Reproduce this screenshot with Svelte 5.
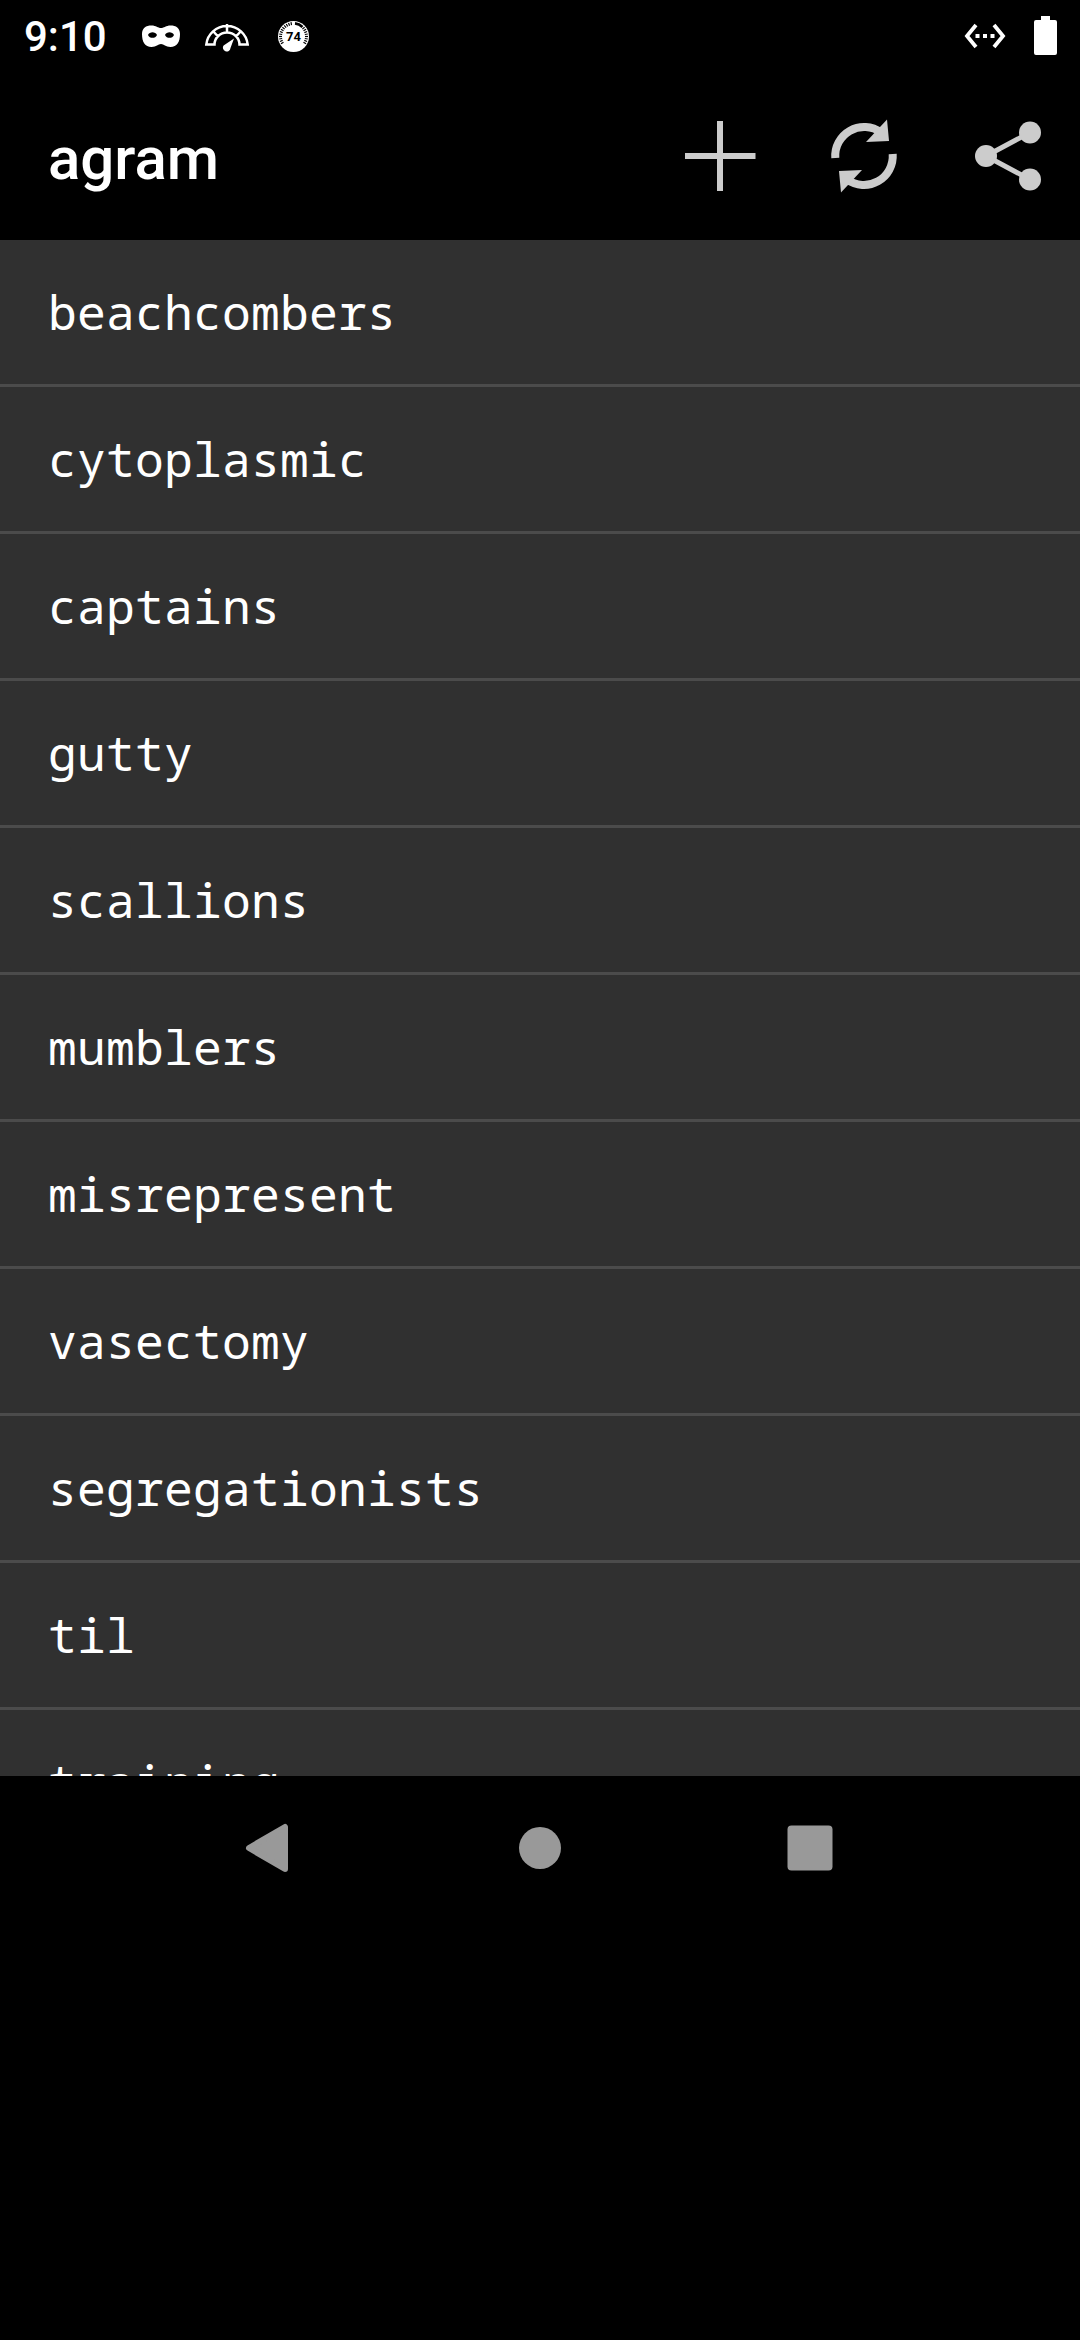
<script>
  const words = [
    'beachcombers', 'cytoplasmic', 'captains', 'gutty', 'scallions', 'mumblers',
    'misrepresent', 'vasectomy', 'segregationists', 'til', 'training'
  ];
  const ticks = Array.from({ length: 25 }, (_, i) => -120 + i * 10).filter((a) => a < 0 || a > 40);
</script>

<div class="screen">
  <header class="status">
    <div class="left">
      <span class="clock">9:10</span>
      <svg class="mask" width="40" height="24" viewBox="0 0 40 24">
        <path fill="#fff" fill-rule="evenodd" d="M1 9C1 3 5 0.500 10.500 0.500C15 0.500 17 3 20 3S25 0.500 29.500 0.500C35 0.500 39 3 39 9C39 17 36 22 29.500 22C24.500 22 23 19 20 19S15.500 22 10.500 22C4 22 1 17 1 9ZM7 10C8.500 13.800 14.500 13.800 16 10C14.500 6.400 8.500 6.400 7 10ZM24 10C25.500 13.800 31.500 13.800 33 10C31.500 6.400 25.500 6.400 24 10Z" />
      </svg>
      <svg class="gauge" width="46" height="30" viewBox="0 0 46 30">
        <path fill="none" stroke="#fff" stroke-width="2.500" d="M2.300 22.500A20.800 20.500 0 0 1 43.700 22.500H35.500A12.500 12 0 0 0 10.500 22.500ZM23 2V10.500M8.500 8.500L14 14.500M37.500 8.500L32 14.500" />
        <path fill="#fff" d="M30 16.500L26.500 26A3.800 3.800 0 1 1 19.600 23.500Z" />
      </svg>
      <svg class="badge" width="32" height="32" viewBox="0 0 32 32">
        <circle cx="16.500" cy="16.500" r="15.500" fill="#fff" />
        <path fill="none" stroke="#000" stroke-width="2.600" d="M18 3.400A13.200 13.200 0 0 1 25.500 7" />
        {#each ticks as angle}
          <path stroke="#000" stroke-width="1.200" d="M16.500 2V5" transform="rotate({angle} 16.500 16.500)" />
        {/each}
        <text x="16.500" y="21.300" text-anchor="middle">74</text>
      </svg>
    </div>
    <div class="right">
      <svg width="42" height="26" viewBox="0 0 42 26">
        <path fill="none" stroke="#fff" stroke-width="3.800" d="M12 2L3 13L12 24M30 2L39 13L30 24" />
        <path fill="#fff" d="M11.500 11H15.500V15H11.500ZM19 11H23V15H19ZM26.500 11H30.500V15H26.500Z" />
      </svg>
      <svg width="23" height="39" viewBox="0 0 23 39">
        <path fill="#fff" d="M7 0H16V4H21A2 2 0 0 1 23 6V37A2 2 0 0 1 21 39H2A2 2 0 0 1 0 37V6A2 2 0 0 1 2 4H7Z" />
      </svg>
    </div>
  </header>

  <div class="bar">
    <h1>agram</h1>
    <div class="actions">
      <svg viewBox="0 0 144 168"><path stroke="#ccc" stroke-width="6" d="M37 84H107.500M72 49V119" /></svg>
      <svg viewBox="0 0 144 168">
        <g id="arrow">
          <path fill="none" stroke="#ccc" stroke-width="8" d="M43.300 86A28.900 28.900 0 0 1 89 60.500" />
          <path fill="#ccc" d="M95 47.500L97 69L74 70Z" />
        </g>
        <use href="#arrow" transform="rotate(180 72 84)" />
      </svg>
      <svg viewBox="0 0 144 168">
        <path fill="none" stroke="#ccc" stroke-width="5" d="M94 60.500L50 84L94 107.500" />
        <g fill="#ccc"><circle cx="50" cy="84" r="11" /><circle cx="94" cy="60.500" r="11" /><circle cx="94" cy="107.500" r="11" /></g>
      </svg>
    </div>
  </div>

  <ul class="words">
    {#each words as word}<li>{word}</li>{/each}
  </ul>

  <nav>
    <svg viewBox="0 0 72 72"><path fill="#999" stroke="#999" stroke-width="6" stroke-linejoin="round" d="M15 36L51 15V57Z" /></svg>
    <svg viewBox="0 0 72 72"><circle cx="36" cy="36" r="21" fill="#999" /></svg>
    <svg viewBox="0 0 72 72"><rect x="13.500" y="13.500" width="45" height="45" rx="4" fill="#999" /></svg>
  </nav>
</div>

<style>
  :global(body) { margin: 0; background: #000; }
  .screen { width: 1080px; height: 2340px; background: #000; color: #fff; font-family: Roboto, sans-serif; overflow: hidden; }
  svg { display: block; flex: none; }
  .status { height: 72px; display: flex; justify-content: space-between; box-sizing: border-box; padding: 0 24px; }
  .left, .right { display: flex; align-items: flex-start; }
  .right { gap: 28px; padding-top: 16px; }
  .status .right { margin-right: -1px; }
  .clock { font-size: 42px; font-weight: 500; line-height: 50px; width: 117px; padding-top: 12px; }
  .mask { margin-top: 25px; }
  .gauge { margin: 22px 0 0 23px; }
  .badge { margin: 20px 0 0 27px; }
  .badge text { font: 700 13px Roboto, sans-serif; }
  .right svg:first-child { margin-top: 7px; }
  .bar { height: 168px; display: flex; align-items: center; justify-content: space-between; padding-left: 48px; }
  h1 { margin: 0; font-size: 60px; font-weight: 500; line-height: 70px; padding-top: 5px; }
  .actions { display: flex; }
  .actions svg { width: 144px; height: 168px; }
  .words { margin: 0; padding: 0; list-style: none; height: 1536px; overflow: hidden; background: #303030; }
  li { height: 144px; border-bottom: 3px solid #4b4b4b; padding-left: 48px; font: 48px/144px "Droid Sans Mono", "Noto Sans Mono", "DejaVu Sans Mono", monospace; letter-spacing: 0.2px; }
  nav { height: 144px; display: flex; align-items: center; justify-content: center; gap: 198px; }
  nav svg { width: 72px; height: 72px; }
</style>
